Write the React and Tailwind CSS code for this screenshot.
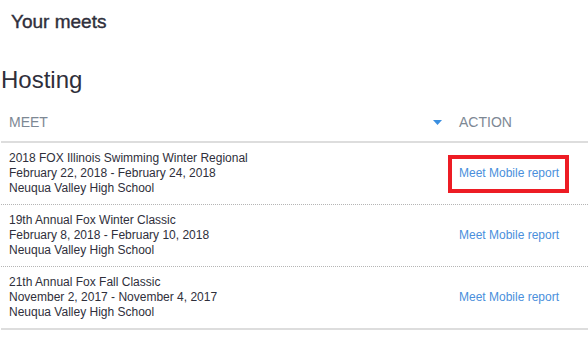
const meets = [
  {
    name: "2018 FOX Illinois Swimming Winter Regional",
    dates: "February 22, 2018 - February 24, 2018",
    venue: "Neuqua Valley High School",
    highlight: true,
  },
  {
    name: "19th Annual Fox Winter Classic",
    dates: "February 8, 2018 - February 10, 2018",
    venue: "Neuqua Valley High School",
  },
  {
    name: "21th Annual Fox Fall Classic",
    dates: "November 2, 2017 - November 4, 2017",
    venue: "Neuqua Valley High School",
  },
];

export default function App() {
  return (
    <div className="h-[355px] w-[588px] overflow-hidden bg-white font-['Liberation_Sans',Arial,sans-serif] text-[#2f2f3b]">
      <h2 className="pl-[11px] pt-[10px] text-[19px] leading-[24px] [-webkit-text-stroke:0.4px_#2f2f3b]">Your meets</h2>

      <h1 className="mt-[32px] pl-[1px] text-[24px] leading-[28px]">Hosting</h1>

      <div className="ml-px mt-[8px] w-[587px]">
        <div className="flex h-[41px] items-center border-b-2 border-[#dddddd] text-[14px] text-[#7d8894]">
          <div className="flex flex-1 items-center justify-between pl-[8px] pr-[9px]">
            <span className="pt-[2px]">MEET</span>
            <svg width="9" height="5" viewBox="0 0 9 5" className="mt-[2px]">
              <path d="M0 0h9L4.5 5z" fill="#3b8fe0" />
            </svg>
          </div>
          <div className="w-[137px] pl-[8px] pt-[2px]">ACTION</div>
        </div>

        {meets.map((m, i) => (
          <div
            key={m.name}
            className={
              i === meets.length - 1
                ? "flex items-center border-b-2 border-[#dddddd] py-[8px]"
                : "flex items-center border-b border-dotted border-[#b5b5b5] py-[8px]"
            }
          >
            <div className="flex-1 pl-[8px] text-[12px] leading-[15px]">
              <div>{m.name}</div>
              <div>{m.dates}</div>
              <div>{m.venue}</div>
            </div>
            <div className="relative w-[137px] pl-[8px] text-[12px] leading-[15px]">
              <a href="#" className="text-[#4a8fdc]">Meet Mobile report</a>
              {m.highlight && (
                <div className="absolute left-[-3px] top-[-11px] h-[38px] w-[121px] border-4 border-[#ed1c24]" />
              )}
            </div>
          </div>
        ))}
      </div>
    </div>
  );
}
